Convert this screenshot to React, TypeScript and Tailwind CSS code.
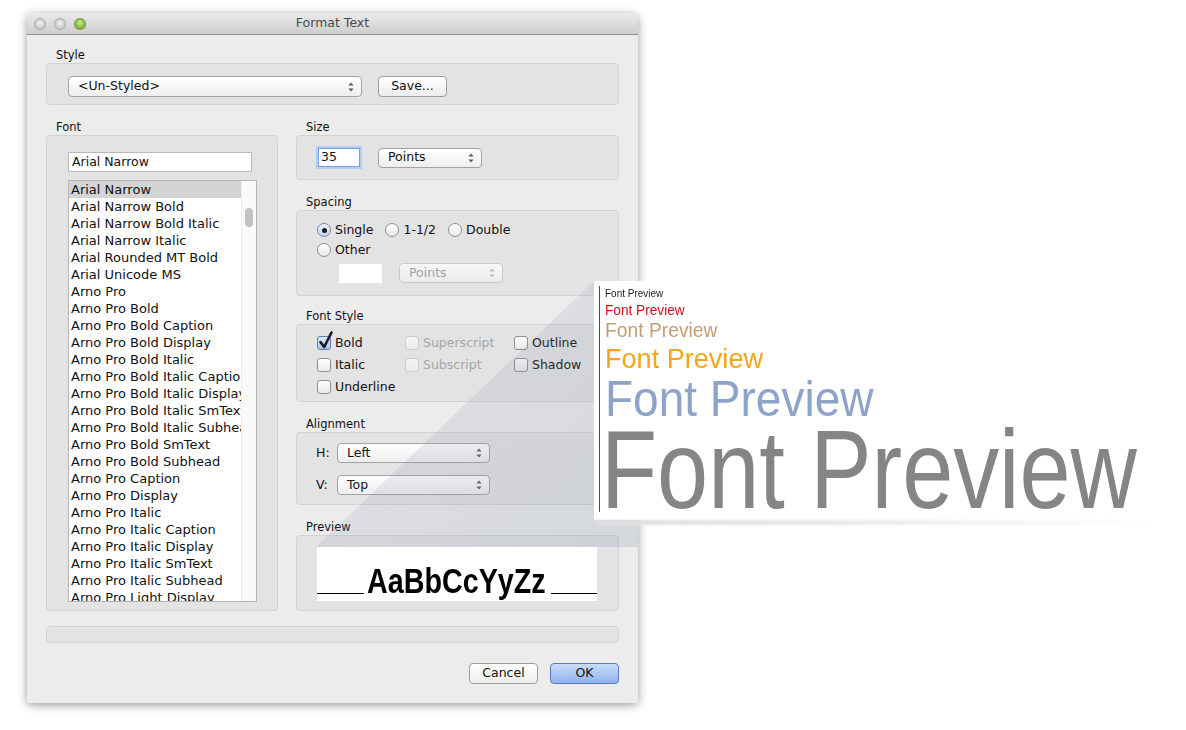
import type { ReactNode } from "react"

const fonts = [
  "Arial Narrow",
  "Arial Narrow Bold",
  "Arial Narrow Bold Italic",
  "Arial Narrow Italic",
  "Arial Rounded MT Bold",
  "Arial Unicode MS",
  "Arno Pro",
  "Arno Pro Bold",
  "Arno Pro Bold Caption",
  "Arno Pro Bold Display",
  "Arno Pro Bold Italic",
  "Arno Pro Bold Italic Caption",
  "Arno Pro Bold Italic Display",
  "Arno Pro Bold Italic SmText",
  "Arno Pro Bold Italic Subhead",
  "Arno Pro Bold SmText",
  "Arno Pro Bold Subhead",
  "Arno Pro Caption",
  "Arno Pro Display",
  "Arno Pro Italic",
  "Arno Pro Italic Caption",
  "Arno Pro Italic Display",
  "Arno Pro Italic SmText",
  "Arno Pro Italic Subhead",
  "Arno Pro Light Display",
  "Arno Pro Light Italic Display",
]

function Arrows({ muted = false }: { muted?: boolean }) {
  const c = muted ? "#bdbdbd" : "#5c5c5c"
  return (
    <svg width="6" height="10" viewBox="0 0 6 10">
      <path d="M3 0.5 L5.6 3.6 L0.4 3.6 Z" fill={c} />
      <path d="M0.4 6.4 L5.6 6.4 L3 9.5 Z" fill={c} />
    </svg>
  )
}

function Popup({ label, className, muted = false }: { label: string; className: string; muted?: boolean }) {
  return (
    <div
      className={`flex items-center justify-between rounded-[4px] border bg-linear-to-b pl-[9px] pr-[7px] text-[12.5px] ${
        muted
          ? "border-[#cacaca] from-[#f7f7f7] to-[#ececec] text-[#a3a3a3]"
          : "border-[#a3a3a3] from-white to-[#eeeeee] text-[#111]"
      } ${className}`}
    >
      <span>{label}</span>
      <Arrows muted={muted} />
    </div>
  )
}

function Button({ children, primary = false }: { children: ReactNode; primary?: boolean }) {
  return (
    <div
      className={`flex h-[21px] w-[69px] items-center justify-center rounded-[4px] border bg-linear-to-b text-[12.5px] text-[#111] ${
        primary ? "border-[#5b7bbd] from-[#c9dcfa] to-[#8fb3ee]" : "border-[#9d9d9d] from-white to-[#ededed]"
      }`}
    >
      {children}
    </div>
  )
}

function Label({ children }: { children: ReactNode }) {
  return <div className="h-[16px] pl-[10px] text-[11.5px] leading-[16px] text-[#111]">{children}</div>
}

function Group({ children, className = "" }: { children?: ReactNode; className?: string }) {
  return <div className={`rounded-[4px] border border-[#d3d3d3] bg-[#e3e3e3] ${className}`}>{children}</div>
}

function Radio({ on = false }: { on?: boolean }) {
  return (
    <div
      className={`flex h-[14px] w-[14px] items-center justify-center rounded-full border bg-linear-to-b ${
        on ? "border-[#6d88b5] from-[#eef3fc] to-[#c3d5f1]" : "border-[#8e8e8e] from-white to-[#e9e9e9]"
      }`}
    >
      {on && <div className="h-[5px] w-[5px] rounded-full bg-[#1a1a1a]" />}
    </div>
  )
}

function Check({ label, on = false, disabled = false }: { label: string; on?: boolean; disabled?: boolean }) {
  return (
    <div className="flex h-[22px] items-center gap-[4px]">
      <div
        className={`relative h-[14px] w-[14px] rounded-[3px] border bg-linear-to-b ${
          on
            ? "border-[#5f80b6] from-[#dfe9f9] to-[#a8c3ea]"
            : disabled
              ? "border-[#cdcdcd] from-[#f4f4f4] to-[#ebebeb]"
              : "border-[#8e8e8e] from-white to-[#e9e9e9]"
        }`}
      >
        {on && (
          <svg className="absolute -top-[6px] left-[0px]" width="16" height="19" viewBox="0 0 16 19">
            <path d="M2.5 11 L6.2 16 L13.5 1.5" fill="none" stroke="#1b1b1b" strokeWidth="2.6" strokeLinecap="round" strokeLinejoin="round" />
          </svg>
        )}
      </div>
      <span className={`text-[12.5px] ${disabled ? "text-[#a6a6a6]" : "text-[#111]"}`}>{label}</span>
    </div>
  )
}

function Light({ green = false }: { green?: boolean }) {
  return (
    <div
      className={`h-[12px] w-[12px] rounded-full border ${
        green
          ? "border-[#6f963c] bg-[radial-gradient(circle_at_50%_40%,#c8eb8a,#7cb33a_70%)]"
          : "border-[#a4a4a4] bg-[radial-gradient(circle_at_50%_40%,#f2f2f2,#c9c9c9_70%)]"
      }`}
    />
  )
}

function Dialog() {
  return (
    <div className="flex h-[690px] w-[611px] flex-col overflow-hidden rounded-t-[5px] rounded-b-[3px] bg-[#ececec] shadow-[0_2px_10px_rgba(0,0,0,0.4)]">
      <div className="relative flex h-[22px] items-center gap-[8px] border-b border-[#8f8f8f] bg-linear-to-b from-[#ebebeb] to-[#cdcdcd] pl-[7px]">
        <Light />
        <Light />
        <Light green />
        <div className="absolute inset-0 flex items-center justify-center text-[12.5px] text-[#4a4a4a]">Format Text</div>
      </div>

      <div className="flex flex-col px-[19px] pt-[12px]">
        <Label>Style</Label>
        <Group className="flex h-[42px] gap-[16px] pl-[21px] pt-[12px]">
          <Popup label="<Un-Styled>" className="h-[21px] w-[294px]" />
          <Button>Save...</Button>
        </Group>

        <div className="mt-[14px] flex gap-[18px]">
          <div className="flex w-[232px] flex-col">
            <Label>Font</Label>
            <Group className="flex h-[476px] flex-col gap-[8px] pl-[21px] pt-[16px]">
              <div className="flex h-[20px] w-[184px] items-center border border-[#b9b9b9] bg-white pl-[3px] text-[12.5px] text-[#111]">
                Arial Narrow
              </div>
              <div className="flex h-[422px] w-[189px] overflow-hidden border border-[#b5b5b5] bg-white">
                <div className="w-[172px] overflow-hidden">
                  {fonts.map((f, i) => (
                    <div
                      key={f}
                      className={`h-[17px] whitespace-nowrap pl-[2px] text-[13px] leading-[17px] text-[#111] ${i === 0 ? "bg-[#d4d4d4]" : ""}`}
                    >
                      {f}
                    </div>
                  ))}
                </div>
                <div className="flex-1 border-l border-[#ededed] bg-[#fafafa] pl-[3px] pt-[27px]">
                  <div className="h-[19px] w-[8px] rounded-full bg-[#c2c2c2]" />
                </div>
              </div>
            </Group>
          </div>

          <div className="flex w-[323px] flex-col">
            <Label>Size</Label>
            <Group className="flex h-[45px] items-center gap-[18px] pl-[21px]">
              <div className="flex h-[19px] w-[42px] items-center border border-[#7b9fd9] bg-white pl-[2px] text-[12.5px] text-[#111] shadow-[0_0_0_2px_#b5cdf2]">
                35
              </div>
              <Popup label="Points" className="h-[20px] w-[104px]" />
            </Group>

            <div className="mt-[14px]">
              <Label>Spacing</Label>
            </div>
            <Group className="flex h-[86px] flex-col pl-[20px] pt-[11px]">
              <div className="flex h-[16px] items-center gap-[12px] text-[12.5px] text-[#111]">
                <div className="flex items-center gap-[4px]">
                  <Radio on />
                  <span>Single</span>
                </div>
                <div className="flex items-center gap-[4px]">
                  <Radio />
                  <span>1-1/2</span>
                </div>
                <div className="flex items-center gap-[4px]">
                  <Radio />
                  <span>Double</span>
                </div>
              </div>
              <div className="mt-[4px] flex h-[16px] items-center gap-[4px] text-[12.5px] text-[#111]">
                <Radio />
                <span>Other</span>
              </div>
              <div className="mt-[5px] flex items-center gap-[17px] pl-[22px]">
                <div className="h-[19px] w-[43px] bg-white" />
                <Popup label="Points" muted className="h-[20px] w-[104px]" />
              </div>
            </Group>

            <div className="mt-[12px]">
              <Label>Font Style</Label>
            </div>
            <Group className="grid h-[78px] grid-cols-[88px_109px_1fr] content-start pl-[20px] pt-[7px]">
              <Check label="Bold" on />
              <Check label="Superscript" disabled />
              <Check label="Outline" />
              <Check label="Italic" />
              <Check label="Subscript" disabled />
              <Check label="Shadow" />
              <Check label="Underline" />
            </Group>

            <div className="mt-[14px]">
              <Label>Alignment</Label>
            </div>
            <Group className="flex h-[73px] flex-col gap-[12px] pl-[19px] pt-[10px]">
              <div className="flex items-center text-[12.5px] text-[#111]">
                <span className="w-[21px]">H:</span>
                <Popup label="Left" className="h-[20px] w-[153px]" />
              </div>
              <div className="flex items-center text-[12.5px] text-[#111]">
                <span className="w-[21px]">V:</span>
                <Popup label="Top" className="h-[20px] w-[153px]" />
              </div>
            </Group>

            <div className="mt-[14px]">
              <Label>Preview</Label>
            </div>
            <Group className="h-[76px] pl-[20px] pt-[11px]">
              <div className="flex h-[54px] w-[280px] items-end bg-white pb-[7px]">
                <div className="h-[1.5px] w-[47px] bg-black" />
                <div className="-mb-[4px] ml-[3px] w-[180px] overflow-visible">
                  <div className="origin-left scale-x-[0.82] whitespace-nowrap font-['Liberation_Sans',Arial,sans-serif] text-[35px] font-bold leading-none text-black">
                    AaBbCcYyZz
                  </div>
                </div>
                <div className="ml-[4px] h-[1.5px] flex-1 bg-black" />
              </div>
            </Group>
          </div>
        </div>

        <Group className="mt-[15px] h-[17px]" />

        <div className="mt-[20px] flex justify-end gap-[12px]">
          <Button>Cancel</Button>
          <Button primary>OK</Button>
        </div>
      </div>
    </div>
  )
}

function Callout() {
  return (
    <div className="absolute left-[594px] top-[281px] h-[239px] w-[592px] bg-white pl-[5px] pt-[5px] font-['Liberation_Sans',Arial,sans-serif]">
      <div className="h-[226px] border-l border-[#4a4a4a] pl-[5px] pt-[2px]">
        <div className="h-[14px] origin-left scale-x-[0.95] whitespace-nowrap text-[10.5px] leading-none text-[#1a1a1a]">Font Preview</div>
        <div className="h-[18px] origin-left scale-x-[0.91] whitespace-nowrap text-[15px] leading-none text-[#d0101c]">Font Preview</div>
        <div className="h-[24px] origin-left scale-x-[0.94] whitespace-nowrap text-[20.5px] leading-none text-[#c59b72]">Font Preview</div>
        <div className="h-[30px] origin-left scale-x-[0.95] whitespace-nowrap text-[28.5px] leading-none text-[#f4a51c]">Font Preview</div>
        <div className="h-[40px] origin-left scale-x-[0.92] whitespace-nowrap text-[50px] leading-none text-[#8ea3c9]">Font Preview</div>
        <div className="-ml-[4px] origin-left scale-x-[0.82] whitespace-nowrap text-[112px] leading-none text-[#858585]">Font Preview</div>
      </div>
    </div>
  )
}

export default function App() {
  return (
    <div className="relative h-[730px] w-[1186px] overflow-hidden bg-white pl-[27px] pt-[13px] font-['DejaVu_Sans','Liberation_Sans',sans-serif]">
      <Dialog />

      {/* beam from the preview box up to the callout */}
      <svg className="pointer-events-none absolute left-0 top-0" width="1186" height="730" viewBox="0 0 1186 730">
        <defs>
          <linearGradient id="beam" x1="0" y1="0" x2="1" y2="1">
            <stop offset="0" stopColor="#7f8ea6" stopOpacity="0.1" />
            <stop offset="1" stopColor="#7f8ea6" stopOpacity="0.22" />
          </linearGradient>
        </defs>
        <polygon points="594,281 316,547 638,547 638,520 598,520 598,281" fill="url(#beam)" />
      </svg>

      <Callout />
      <div className="absolute left-[594px] top-[520px] h-[5px] w-[560px] bg-linear-to-r from-[#dedede] via-[#ececec] to-transparent blur-[1px]" />
    </div>
  )
}
